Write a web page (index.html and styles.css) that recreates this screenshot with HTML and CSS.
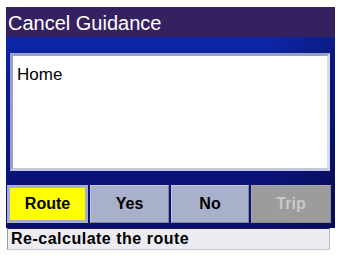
FILE: index.html
```html
<!DOCTYPE html>
<html>
<head>
<meta charset="utf-8">
<link rel="stylesheet" href="styles.css">
</head>
<body>
<div class="device">
  <div class="title">Cancel Guidance</div>
  <div class="panel">
    <div class="textbox">Home</div>
    <div class="buttons">
      <div class="btn btn-active">Route</div>
      <div class="btn">Yes</div>
      <div class="btn">No</div>
      <div class="btn btn-disabled">Trip</div>
    </div>
  </div>
  <div class="status">Re-calculate the route</div>
</div>
</body>
</html>
```
FILE: styles.css
```css
html, body {
  margin: 0;
  padding: 0;
  background: #ffffff;
}
body {
  font-family: "Liberation Sans", Arial, sans-serif;
}
.device {
  margin: 7px 0 0 6px;
  width: 329px;
}
.title {
  height: 30px;
  line-height: 30px;
  box-sizing: border-box;
  padding: 1px 0 0 2px;
  background: #35215f;
  color: #ffffff;
  font-size: 20px;
}
.panel {
  height: 191px;
  box-sizing: border-box;
  padding: 16px 0 0 1px;
  background: linear-gradient(90deg, rgba(0,0,0,0) 80%, rgba(0,0,30,0.25) 100%),
              linear-gradient(180deg, #0d27aa 0%, #0a1d98 20%, #0a1580 60%, #0a0f6a 100%);
}
.textbox {
  margin: 0 5px 0 3px;
  height: 118px;
  box-sizing: border-box;
  border: 3px solid;
  border-color: #9aa0c2 #d6d9ea #c4c8de #9aa0c2;
  background: #ffffff;
  color: #000000;
  font-size: 17px;
  line-height: 20px;
  padding: 9px 0 0 4px;
}
.buttons {
  margin-top: 14px;
  display: grid;
  grid-template-columns: 81px 79px 78px 80px;
  column-gap: 2px;
  padding-right: 3px;
}
.btn {
  height: 38px;
  box-sizing: border-box;
  background: #a9b0cc;
  border: 1px solid;
  border-color: #c2c8de #7e86a8 #7e86a8 #c2c8de;
  color: #000000;
  font-weight: bold;
  font-size: 16px;
  line-height: 36px;
  text-align: center;
}
.btn-active {
  background: #ffff00;
  border: 3px solid #a9b0cc;
  line-height: 32px;
}
.btn-disabled {
  background: #9c9c9c;
  border-color: #a8a8a8 #8c8c8c #8c8c8c #a8a8a8;
  color: #c9c9c9;
}
.status {
  margin-left: 1px;
  width: 323px;
  height: 22px;
  box-sizing: border-box;
  background: #ebebf1;
  border: 1px solid;
  border-color: #1a1a5a #b8b8c8 #c8c8d4 #9a9ab0;
  color: #000000;
  font-weight: bold;
  font-size: 16px;
  letter-spacing: 0.5px;
  line-height: 20px;
  padding-left: 3px;
  white-space: nowrap;
}
```
